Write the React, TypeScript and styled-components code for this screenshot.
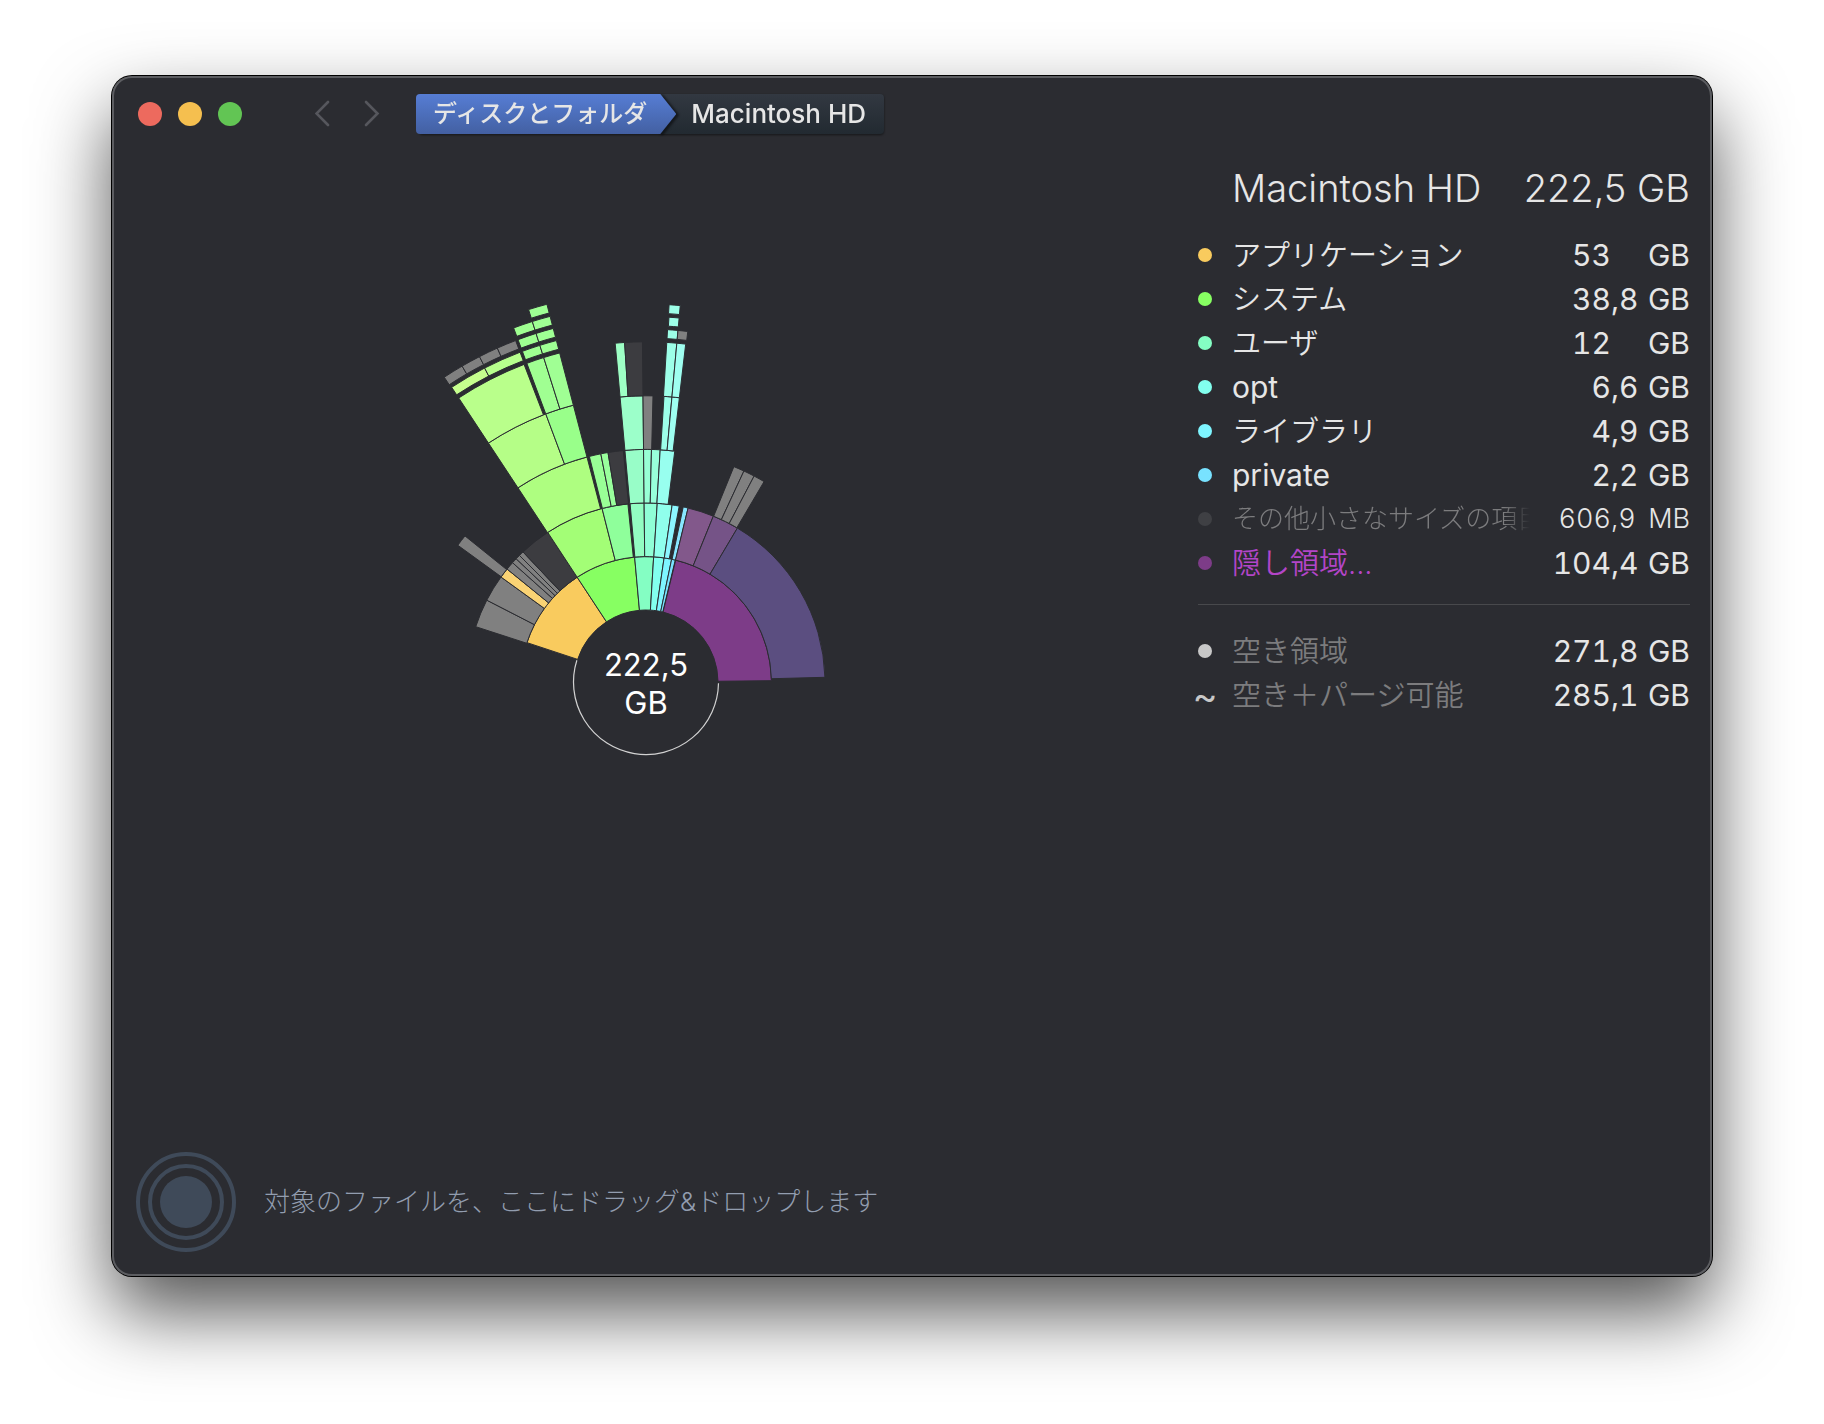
import React from "react";
import styled, { createGlobalStyle } from "styled-components";

const GlobalStyle = createGlobalStyle`
  *, *::before, *::after { box-sizing: border-box; }
  body {
    margin: 0;
    background: #fff;
    font-family: Inter, "Noto Sans CJK JP", sans-serif;
    color: #e6e6e6;
  }
  button { font: inherit; color: inherit; border: 0; padding: 0; background: none; cursor: pointer; }
  ul, ol, p, h1 { margin: 0; padding: 0; list-style: none; font-weight: inherit; }
`;

const SURFACE = "#2b2c31";
const GREY = "#808080";
const SHADE = "#3c3c40";

const Page = styled.div`
  display: flex;
  min-height: 100vh;
  padding: 76px 112px 148px;
`;

const Window = styled.main`
  flex: 1;
  display: flex;
  flex-direction: column;
  border-radius: 20px;
  background: ${SURFACE};
  box-shadow:
    inset 0 0 0 2px #5c5d61,
    0 0 0 1px #000,
    0 36px 76px rgba(0, 0, 0, 0.68);
`;

const Toolbar = styled.header`
  display: flex;
  align-items: center;
  height: 76px;
  padding: 0 26px;
`;

const Lights = styled.div`
  display: flex;
  gap: 16px;
  margin-right: 73px;
`;

const Light = styled.button<{ $color: string }>`
  width: 24px;
  height: 24px;
  border-radius: 50%;
  background: ${(p) => p.$color};
`;

const History = styled.div`
  display: flex;
  gap: 20px;
  margin-right: 25px;
`;

const HistoryButton = styled.button`
  display: flex;
  width: 28px;
  height: 28px;
`;

const Crumbs = styled.ol`
  display: flex;
  font-size: 26px;
  line-height: 40px;
`;

const CrumbItem = styled.li<{ $lead?: boolean }>`
  position: relative;
  z-index: ${(p) => (p.$lead ? 1 : 0)};
  margin-left: ${(p) => (p.$lead ? "0" : "-16px")};
  filter: drop-shadow(${(p) => (p.$lead ? "3px 1px 1px" : "0 1px 1px")} rgba(0, 0, 0, 0.5));
`;

const LeadCrumb = styled.button`
  display: block;
  height: 40px;
  padding: 0 29px 0 17px;
  border-radius: 4px 0 0 4px;
  background: linear-gradient(#567dd4, #4360a2);
  clip-path: polygon(0 0, calc(100% - 16px) 0, 100% 50%, calc(100% - 16px) 100%, 0 100%);
  font-size: 24px;
  font-weight: 500;
`;

const LastCrumb = styled.button`
  display: block;
  height: 40px;
  padding: 0 18px 0 31px;
  border-radius: 0 4px 4px 0;
  background: linear-gradient(#323841, #222a31);
  font-weight: 500;
`;

const Body = styled.div`
  flex: 1;
  display: flex;
`;

const ChartArea = styled.section`
  flex: 1;
  min-width: 0;
  display: flex;
  justify-content: center;
  align-items: flex-start;
  padding-top: 130px;
`;

const Sidebar = styled.aside`
  width: 532px;
  padding: 12px 22px 0 18px;
`;

const TitleRow = styled.div`
  display: flex;
  justify-content: space-between;
  margin-bottom: 21px;
  padding-left: 34px;
  font-size: 38px;
  line-height: 48px;
  font-weight: 300;
`;

const Title = styled.h1`
  font-size: inherit;
`;

const List = styled.ul`
  & + & {
    margin-top: 19px;
    padding-top: 24px;
    border-top: 1px solid #48494c;
  }
`;

const Row = styled.li<{ $small?: boolean }>`
  display: flex;
  align-items: center;
  height: 44px;
  line-height: 44px;
  font-size: ${(p) => (p.$small ? "27px" : "30px")};
  font-weight: ${(p) => (p.$small ? 300 : 400)};
`;

const Marker = styled.span`
  display: flex;
  justify-content: center;
  width: 14px;
  margin-right: 20px;
  color: #c8c8c8;
  font-size: 38px;
`;

const Dot = styled.span<{ $color: string }>`
  width: 14px;
  height: 14px;
  border-radius: 50%;
  background: ${(p) => p.$color};
`;

const Name = styled.span<{ $color?: string; $fade?: boolean }>`
  flex: 1;
  min-width: 0;
  overflow: hidden;
  white-space: nowrap;
  color: ${(p) => p.$color ?? "#e6e6e6"};
  mask-image: ${(p) => (p.$fade ? "linear-gradient(90deg, #000 calc(100% - 26px), transparent)" : "none")};
`;

const Kana = styled.span<{ $small?: boolean }>`
  font-size: ${(p) => (p.$small ? "26px" : "29px")};
  font-weight: ${(p) => (p.$small ? 300 : 350)};
`;

const Value = styled.span`
  display: flex;
  justify-content: flex-end;
  width: 160px;
  font-variant-numeric: tabular-nums;
`;

const Fraction = styled.span`
  width: 26px;
`;

const Unit = styled.span`
  width: 53px;
  text-align: right;
`;

const DropZone = styled.footer`
  display: flex;
  align-items: center;
  gap: 28px;
  padding: 24px;
  font-size: 26px;
  line-height: 40px;
  font-weight: 300;
  color: #929daf;
`;

const CenterLabel = styled.text`
  font-size: 31px;
  fill: #fff;
  text-anchor: middle;
`;

// Radii of the bands, from the centre out; the thin ones hold the deepest folders.
const BANDS: [number, number][] = [
  [72, 125.4],
  [125.4, 179],
  [179, 232.6],
  [232.6, 286.2],
  [286.2, 340.2],
  [344, 353],
  [356.5, 365.5],
  [369, 378],
  [381.5, 390.5],
];

// band, start angle, end angle (degrees clockwise from the top), colour
type Slice = [number, number, number, string];

const SLICES: Slice[] = [
  [0, -71.7, -33.3, "#f9cb5e"],
  [0, -33.3, -5.2, "#87ff62"],
  [0, -5.2, 3.5, "#84fec3"],
  [0, 3.5, 8.3, "#82ffee"],
  [0, 8.3, 11.8, "#7ef5ff"],
  [0, 11.8, 13.5, "#78e2ff"],
  [0, 13.7, 89.4, "#7d3c88"],

  [1, -72, -62.8, GREY],
  [1, -62.8, -54.1, GREY],
  [1, -54.1, -50.9, "#fad374"],
  [1, -50.9, -48.2, GREY],
  [1, -48.2, -46.5, GREY],
  [1, -46.5, -45, GREY],
  [1, -45, -43.4, GREY],
  [1, -43.4, -33.3, SHADE],
  [1, -33.3, -14.2, "#a3fe76"],
  [1, -14.2, -5.8, "#8fff9b"],
  [1, -5.1, -0.6, "#92fdc2"],
  [1, -0.6, 3.6, "#90fed6"],
  [1, 3.6, 8.4, "#90ffec"],
  [1, 8.4, 10.7, "#8cf6ff"],
  [1, 12, 13.6, "#88e6ff"],
  [1, 13.6, 22.1, "#82588b"],
  [1, 22.1, 30.7, "#755387"],
  [1, 30.7, 88.5, "#5b4e80"],

  [2, -54, -51.1, GREY],
  [2, -33.4, -14.7, "#aefe80"],
  [2, -14.1, -11.2, "#99ff96"],
  [2, -11.2, -9.4, "#99ff9c"],
  [2, -9.4, -5.6, SHADE],
  [2, -5.2, -0.6, "#98fdc8"],
  [2, -0.6, 1.35, "#98ffd5"],
  [2, 1.35, 3.5, "#98ffda"],
  [2, 3.5, 7.1, "#98ffef"],
  [2, 22.2, 24.9, GREY],
  [2, 24.9, 27.7, GREY],
  [2, 27.7, 30.5, GREY],

  [3, -33.4, -20.5, "#b5fe87"],
  [3, -20.5, -14.7, "#99ff8a"],
  [3, -5.2, -0.6, "#9cffca"],
  [3, -0.6, 1.4, GREY],
  [3, 3.6, 5.2, "#9cfee9"],
  [3, 5.2, 6.7, "#9efff1"],

  [4, -33.4, -21, "#b9ff8b"],
  [4, -20.5, -17.5, "#a0ff92"],
  [4, -17.5, -14.7, "#a0ff94"],
  [4, -5.2, -3.6, "#9effc5"],
  [4, -3.6, -0.6, SHADE],
  [4, 3.5, 5.2, "#9dffe8"],
  [4, 5.2, 6.7, "#9ffff0"],

  [5, -33.4, -27.2, "#c6ff8e"],
  [5, -27.2, -20.9, "#b7ff8d"],
  [5, -20.5, -17.5, "#9fff91"],
  [5, -17.5, -14.7, "#9fff94"],
  [5, 3.5, 5.2, "#9dffe8"],
  [5, 5.2, 6.8, GREY],

  [6, -33.5, -30.2, GREY],
  [6, -30.2, -27.1, GREY],
  [6, -27.1, -24, GREY],
  [6, -24, -20.9, GREY],
  [6, -20.5, -17.5, "#9fff91"],
  [6, -17.5, -14.7, "#9fff94"],
  [6, 3.6, 5.2, "#9dffe8"],

  [7, -20.5, -17.5, "#9fff91"],
  [7, -17.5, -14.7, "#9fff94"],
  [7, 3.5, 5.2, "#9dffe8"],

  [8, -17.5, -14.7, "#9fff94"],
];

function point(radius: number, degrees: number) {
  const a = (degrees * Math.PI) / 180;
  return `${(radius * Math.sin(a)).toFixed(2)} ${(-radius * Math.cos(a)).toFixed(2)}`;
}

function slicePath([band, start, end]: Slice) {
  const [inner, outer] = BANDS[band];
  return [
    `M${point(inner, start)}`,
    `L${point(outer, start)}`,
    `A${outer} ${outer} 0 0 1 ${point(outer, end)}`,
    `L${point(inner, end)}`,
    `A${inner} ${inner} 0 0 0 ${point(inner, start)}Z`,
  ].join("");
}

function Sunburst() {
  return (
    <svg width="800" height="560" viewBox="-400 -400 800 560" role="img" aria-label="Macintosh HD">
      <path
        d={`M${point(72.5, 91)}A72.5 72.5 0 1 1 ${point(72.5, -72.5)}`}
        fill="none"
        stroke="#d2d2d2"
        strokeWidth="1.2"
      />
      {SLICES.map((slice, i) => (
        <path key={i} d={slicePath(slice)} fill={slice[3]} stroke={SURFACE} strokeWidth="1" />
      ))}
      <CenterLabel x="0" y="-6">222,5</CenterLabel>
      <CenterLabel x="0" y="32">GB</CenterLabel>
    </svg>
  );
}

type Entry = {
  name: string;
  kana?: boolean;
  color?: string;
  textColor?: string;
  whole: string;
  fraction?: string;
  unit?: string;
  small?: boolean;
};

const FOLDERS: Entry[] = [
  { name: "アプリケーション", kana: true, color: "#f9cb5e", whole: "53" },
  { name: "システム", kana: true, color: "#87ff62", whole: "38", fraction: ",8" },
  { name: "ユーザ", kana: true, color: "#84fec3", whole: "12" },
  { name: "opt", color: "#82ffee", whole: "6", fraction: ",6" },
  { name: "ライブラリ", kana: true, color: "#7ef5ff", whole: "4", fraction: ",9" },
  { name: "private", color: "#78e2ff", whole: "2", fraction: ",2" },
  {
    name: "その他小さなサイズの項目",
    kana: true,
    color: "#3f4044",
    textColor: "#7c7c7e",
    whole: "606",
    fraction: ",9",
    unit: "MB",
    small: true,
  },
  { name: "隠し領域...", kana: true, color: "#7d3c88", textColor: "#b345c8", whole: "104", fraction: ",4" },
];

const FREE: Entry[] = [
  { name: "空き領域", kana: true, color: "#c8c8c8", textColor: "#7c7c7e", whole: "271", fraction: ",8" },
  { name: "空き＋パージ可能", kana: true, textColor: "#7c7c7e", whole: "285", fraction: ",1" },
];

function EntryRow({ entry }: { entry: Entry }) {
  return (
    <Row $small={entry.small}>
      <Marker>{entry.color ? <Dot $color={entry.color} /> : "~"}</Marker>
      <Name $color={entry.textColor} $fade={entry.small}>
        {entry.kana ? <Kana $small={entry.small}>{entry.name}</Kana> : entry.name}
      </Name>
      <Value>
        {entry.whole}
        <Fraction>{entry.fraction}</Fraction>
        <Unit>{entry.unit ?? "GB"}</Unit>
      </Value>
    </Row>
  );
}

function Chevron({ d }: { d: string }) {
  return (
    <svg width="28" height="28" viewBox="0 0 28 28" fill="none" stroke="#56575d" strokeWidth="2.6" strokeLinecap="round">
      <path d={d} />
    </svg>
  );
}

export default function App() {
  return (
    <Page>
      <GlobalStyle />
      <Window>
        <Toolbar>
          <Lights>
            <Light $color="#ed6a5e" aria-label="閉じる" />
            <Light $color="#f5bf4f" aria-label="しまう" />
            <Light $color="#62c554" aria-label="拡大" />
          </Lights>
          <History>
            <HistoryButton aria-label="戻る">
              <Chevron d="M13 2 L1.5 13.5 L13 25" />
            </HistoryButton>
            <HistoryButton aria-label="進む">
              <Chevron d="M3 2 L14.5 13.5 L3 25" />
            </HistoryButton>
          </History>
          <nav>
            <Crumbs>
              <CrumbItem $lead>
                <LeadCrumb>ディスクとフォルダ</LeadCrumb>
              </CrumbItem>
              <CrumbItem>
                <LastCrumb>Macintosh HD</LastCrumb>
              </CrumbItem>
            </Crumbs>
          </nav>
        </Toolbar>
        <Body>
          <ChartArea>
            <Sunburst />
          </ChartArea>
          <Sidebar>
            <TitleRow>
              <Title>Macintosh HD</Title>
              <span>222,5 GB</span>
            </TitleRow>
            <List>
              {FOLDERS.map((e) => (
                <EntryRow key={e.name} entry={e} />
              ))}
            </List>
            <List>
              {FREE.map((e) => (
                <EntryRow key={e.name} entry={e} />
              ))}
            </List>
          </Sidebar>
        </Body>
        <DropZone>
          <svg width="100" height="100" viewBox="0 0 100 100" fill="none" stroke="#3f4a59" strokeWidth="4" aria-hidden="true">
            <circle cx="50" cy="50" r="48" />
            <circle cx="50" cy="50" r="36" />
            <circle cx="50" cy="50" r="26" fill="#3f4a59" stroke="none" />
          </svg>
          <p>対象のファイルを、ここにドラッグ&amp;ドロップします</p>
        </DropZone>
      </Window>
    </Page>
  );
}
